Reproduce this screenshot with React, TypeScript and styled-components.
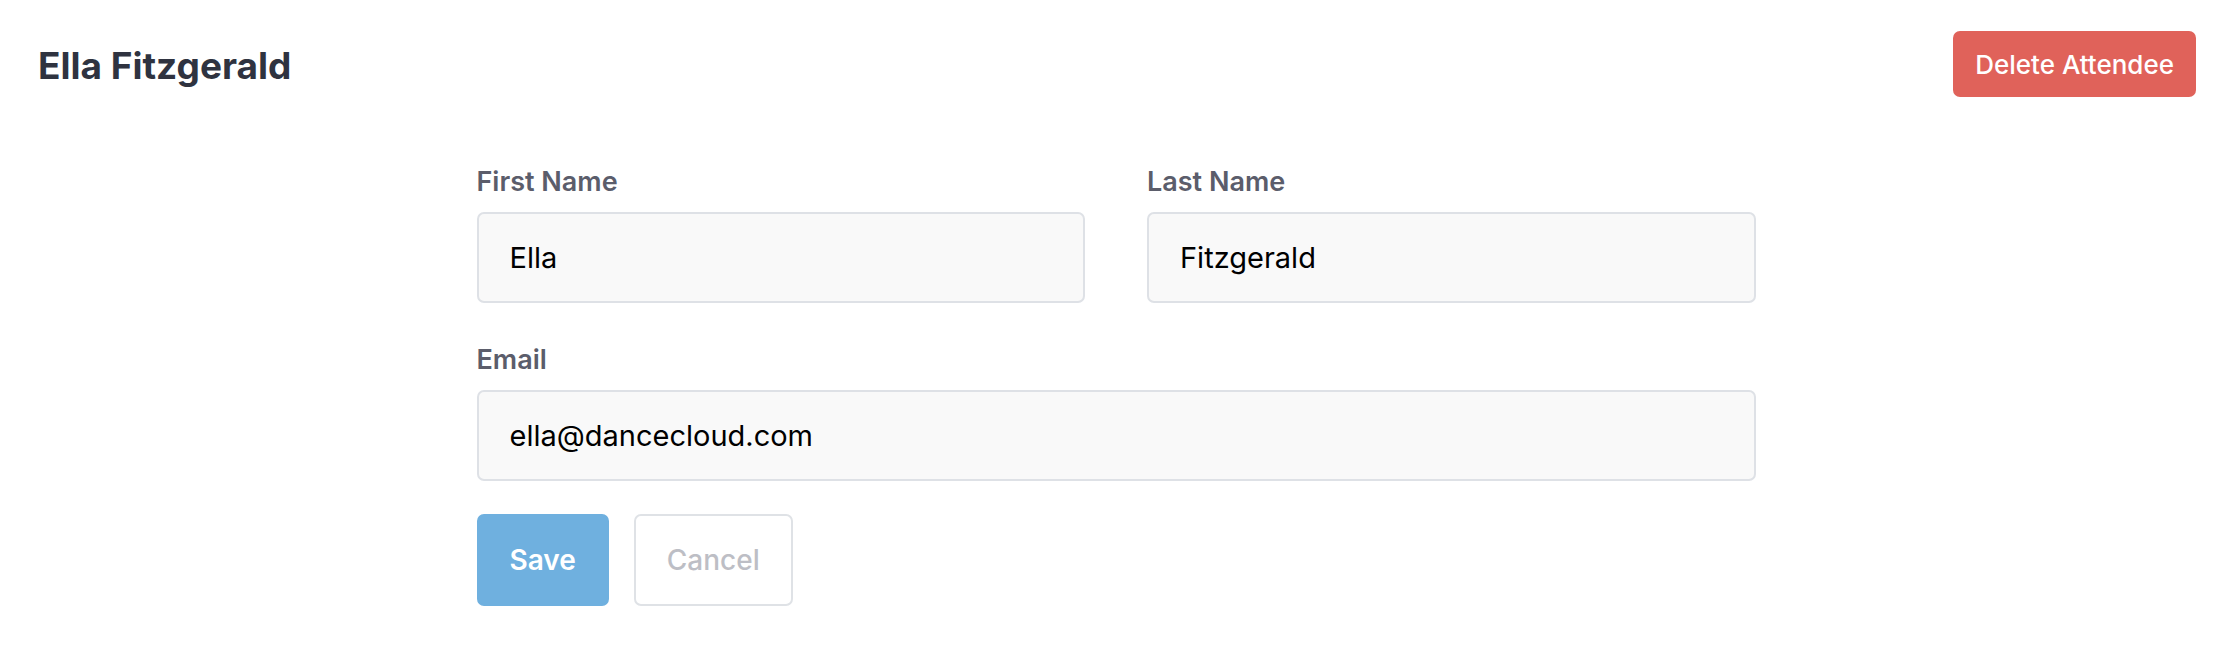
import React from "react";
import styled, { createGlobalStyle } from "styled-components";

const GlobalStyle = createGlobalStyle`
  body {
    margin: 0;
    background: #ffffff;
    font-family: Inter, "Liberation Sans", sans-serif;
  }
`;

const App: React.FC = () => {
  return (
    <Page>
      <GlobalStyle />
      <Header>
        <Title>Ella Fitzgerald</Title>
        <DeleteButton type="button">Delete Attendee</DeleteButton>
      </Header>
      <Form onSubmit={(e) => e.preventDefault()}>
        <Row>
          <Field>
            <Label htmlFor="first">First Name</Label>
            <Input id="first" defaultValue="Ella" />
          </Field>
          <Field>
            <Label htmlFor="last">Last Name</Label>
            <Input id="last" defaultValue="Fitzgerald" />
          </Field>
        </Row>
        <Field>
          <Label htmlFor="email">Email</Label>
          <Input id="email" type="email" defaultValue="ella@dancecloud.com" />
        </Field>
        <ButtonWrapper>
          <Button $primary type="submit">Save</Button>
          <Button type="button">Cancel</Button>
        </ButtonWrapper>
      </Form>
    </Page>
  );
};

const Page = styled.div`
  padding: 31px 24px 0 36px;
`;

const Header = styled.div`
  display: flex;
  justify-content: space-between;
  align-items: center;
  height: 66px;
`;

const Title = styled.h1`
  margin: 4px 0 0 2px;
  font-size: 37px;
  line-height: 46px;
  font-weight: 700;
  color: #2f3340;
`;

const DeleteButton = styled.button`
  height: 66px;
  padding: 0 22px;
  border: none;
  border-radius: 7px;
  background-color: #e0625a;
  color: #ffffff;
  font-family: inherit;
  font-size: 26px;
  font-weight: 500;
  cursor: pointer;
`;

const Form = styled.form`
  width: 1279px;
  margin: 69px auto 0;
  display: flex;
  flex-direction: column;
  gap: 41px;
`;

const Row = styled.div`
  display: grid;
  grid-template-columns: 1fr 1fr;
  column-gap: 62px;
`;

const Field = styled.div`
  display: flex;
  flex-direction: column;
`;

const Label = styled.label`
  font-size: 27px;
  line-height: 32px;
  font-weight: 600;
  color: #5b5d6b;
  margin-bottom: 14px;
`;

const Input = styled.input`
  box-sizing: border-box;
  width: 100%;
  height: 91px;
  padding: 0 31px;
  border: 2px solid #dee1e6;
  border-radius: 7px;
  background-color: #f9f9f9;
  font-family: inherit;
  font-size: 29px;
  color: #000000;
  outline: none;
`;

const ButtonWrapper = styled.div`
  display: flex;
  gap: 25px;
  margin-top: -8px;
`;

const Button = styled.button<{ $primary?: boolean }>`
  box-sizing: border-box;
  height: 92px;
  padding: 0 31px;
  border-radius: 7px;
  border: 2px solid ${(p) => (p.$primary ? "#6fb0df" : "#dfe2e6")};
  background-color: ${(p) => (p.$primary ? "#6fb0df" : "#ffffff")};
  color: ${(p) => (p.$primary ? "#ffffff" : "#bdbec5")};
  font-family: inherit;
  font-size: 28px;
  font-weight: ${(p) => (p.$primary ? 600 : 500)};
  cursor: pointer;
`;

export default App;
